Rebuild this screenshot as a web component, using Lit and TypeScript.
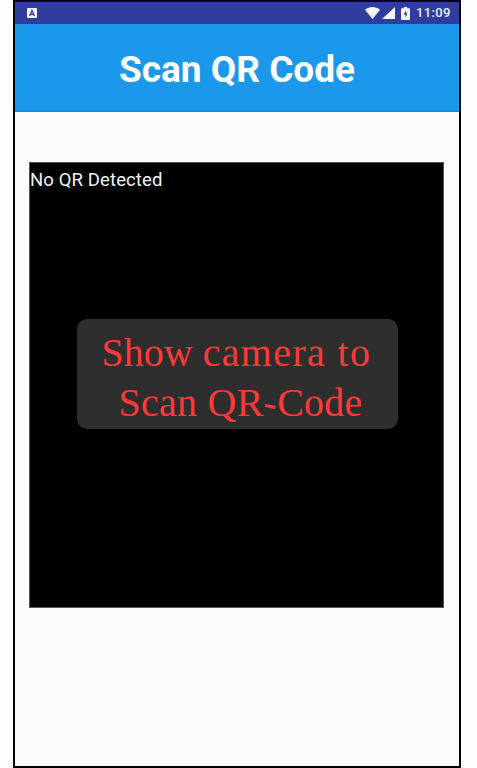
import { LitElement, html, css } from "lit";
import { customElement } from "lit/decorators.js";

@customElement("status-bar")
class StatusBar extends LitElement {
  static styles = css`
    :host { display: flex; align-items: center; height: 22px; background: #303d9f; color: #fff; box-sizing: border-box; padding: 0 8px 0 12px; }
    svg { display: block; fill: #f6f7fc; }
    .spacer { flex: 1; }
    .wifi { margin-right: 2px; }
    .signal { margin-right: 6px; }
    .battery { margin-right: 6px; }
    .time { font: 500 13px/22px Roboto, sans-serif; letter-spacing: 0.35px; color: #eceefa; width: 35px; white-space: nowrap; }
  `;
  render() {
    return html`
      <svg width="10" height="10" viewBox="0 0 10 10">
        <rect width="10" height="10" rx="1" />
        <path d="M2.6 8 5 2.4 7.4 8M3.6 6.3h2.8" fill="none" stroke="#303d9f" stroke-width="1.3" />
      </svg>
      <span class="spacer"></span>
      <svg class="wifi" width="15" height="12" viewBox="0 0 15 12"><path d="M0 2.8C4.5-.9 10.5-.9 15 2.8L7.5 12z" /></svg>
      <svg class="signal" width="13" height="12" viewBox="0 0 13 12"><path d="M13 0v12H0z" /></svg>
      <svg class="battery" width="9" height="13" viewBox="0 0 9 13">
        <path d="M2.8 0h3.4v1.2H8q1 0 1 1V12q0 1-1 1H1q-1 0-1-1V2.2q0-1 1-1h1.8z" />
        <path d="M5.2 3 2.6 7.4h1.8V10.6l2.2-4.2H5.2z" fill="#303d9f" />
      </svg>
      <span class="time">11:09</span>
    `;
  }
}

@customElement("app-root")
class AppRoot extends LitElement {
  static styles = css`
    :host { display: block; width: 477px; height: 768px; background: #fefefe; overflow: hidden; }
    .phone { box-sizing: border-box; width: 448px; height: 768px; margin-left: 13px; border: 2px solid #000; background: #fafafa; }
    .header { height: 88px; box-sizing: border-box; background: #1c98ea; border-bottom: 1px solid #168ad8; display: flex; align-items: center; justify-content: center; }
    h1 { margin: 5px 0 0; font: 700 37px/44px Roboto, sans-serif; color: #fff; white-space: nowrap; }
    .camera { box-sizing: border-box; width: 415px; height: 446px; margin: 50px 0 0 14px; background: #000; border: 1px solid #555; display: flex; flex-direction: column; align-items: center; }
    .status { align-self: flex-start; font: 400 18.5px/22px Roboto, sans-serif; letter-spacing: 0.12px; color: #f4f4f4; margin-top: 6px; height: 22px; white-space: nowrap; }
    .hint { box-sizing: border-box; width: 321px; height: 110px; margin: 128px 0 0 1px; border-radius: 10px; background: #2e2e2e; color: #ff3939; font: 400 40px/50px "Liberation Serif", serif; padding: 9px 0 0 25px; white-space: nowrap; }
    .line { height: 50px; }
    .wide { letter-spacing: 1.35px; }
    .second { padding-left: 17px; letter-spacing: 0.25px; }
    .dash { display: inline-block; transform: rotate(12deg); }
  `;
  render() {
    return html`
      <div class="phone">
        <status-bar></status-bar>
        <div class="header"><h1>Scan QR Code</h1></div>
        <div class="camera">
          <div class="status">No QR Detected</div>
          <div class="hint">
            <div class="line">Show <span class="wide">camera to</span></div>
            <div class="line second">Scan QR<span class="dash">-</span>Code</div>
          </div>
        </div>
      </div>
    `;
  }
}
